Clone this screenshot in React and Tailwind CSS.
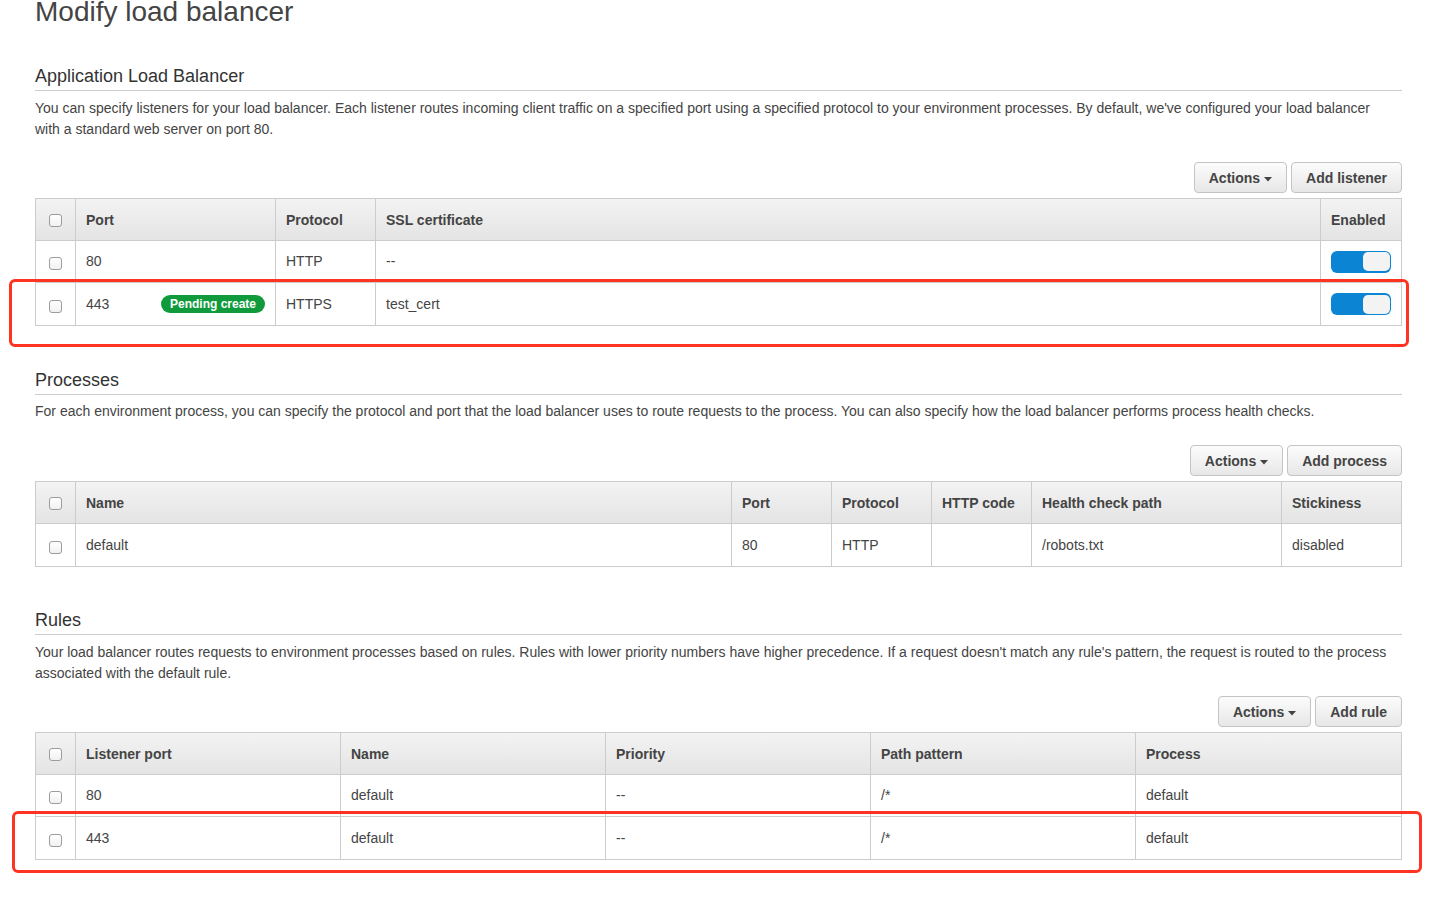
import React from "react";

function Checkbox({ body }) {
  return (
    <span
      className={`block w-[13px] h-[13px] rounded-[3px] border border-[#9c9c9c] bg-[linear-gradient(#ffffff,#f1f1f1)] ${body ? "mt-[4px]" : "mt-[2px]"}`}
    />
  );
}

function Caret() {
  return (
    <svg width="8" height="5" viewBox="0 0 8 5" className="ml-[4px] mt-[1px]">
      <path d="M0 0 L8 0 L4 4.5 Z" fill="#444" />
    </svg>
  );
}

function Btn({ children, caret }) {
  return (
    <button className="h-[31px] px-[14px] pt-[2px] rounded-[4px] border border-[#c4c4c4] bg-[linear-gradient(#fcfcfc,#e7e7e7)] text-[14px] font-bold text-[#444] flex items-center">
      {children}
      {caret && <Caret />}
    </button>
  );
}

function Toggle() {
  return (
    <span className="flex items-center w-[60px] h-[22px] rounded-[6px] bg-[#0b84d4] justify-end pr-[1px]">
      <span className="block w-[27px] h-[19px] rounded-[5px] bg-[#f3f3f3]" />
    </span>
  );
}

function Table({ cols, headers, rows }) {
  return (
    <div className="border border-[#cccccc]">
      <div className={`grid ${cols} h-[42px] border-b border-[#cccccc] bg-[linear-gradient(#f3f3f3,#e4e4e4)]`}>
        <div className="flex justify-center items-center border-r border-[#cccccc]">
          <Checkbox />
        </div>
        {headers.map((h, i) => (
          <div
            key={i}
            className={`flex items-center pl-[10px] pr-[10px] pt-[1px] font-bold text-[14px] text-[#444] ${i < headers.length - 1 ? "border-r border-[#cccccc]" : ""}`}
          >
            {h}
          </div>
        ))}
      </div>
      {rows.map((r, ri) => (
        <div
          key={ri}
          className={`grid ${cols} h-[42px] ${ri < rows.length - 1 ? "border-b border-[#cccccc]" : ""}`}
        >
          <div className="flex justify-center items-center border-r border-[#cccccc]">
            <Checkbox body />
          </div>
          {r.map((c, i) => (
            <div
              key={i}
              className={`flex items-center px-[10px] text-[14px] text-[#444] ${i < r.length - 1 ? "border-r border-[#cccccc]" : ""}`}
            >
              {c}
            </div>
          ))}
        </div>
      ))}
    </div>
  );
}

function Heading({ children, className }) {
  return (
    <h2 className={`text-[18px] leading-[20px] text-[#333] pb-[4px] border-b border-[#cccccc] ${className}`}>
      {children}
    </h2>
  );
}

export default function App() {
  return (
    <div className="relative w-full min-h-[897px] bg-white overflow-hidden font-['Liberation_Sans',Arial,Helvetica,sans-serif] text-[#444]">
      <div className="px-[35px] w-[1437px]">
        <h1 className="text-[28px] leading-[32px] text-[#444] mt-[-4px]">Modify load balancer</h1>

        <Heading className="mt-[38px]">Application Load Balancer</Heading>
        <p className="mt-[7px] text-[14px] leading-[21px] text-[#444]">
          You can specify listeners for your load balancer. Each listener routes incoming client traffic on a specified port using a specified protocol to your environment processes. By default, we've configured your load balancer
          <br />
          with a standard web server on port 80.
        </p>
        <div className="flex justify-end gap-[4px] mt-[22px]">
          <Btn caret>Actions</Btn>
          <Btn>Add listener</Btn>
        </div>
        <div className="mt-[5px]">
          <Table
            cols="grid-cols-[40px_200px_100px_1fr_80px]"
            headers={["Port", "Protocol", "SSL certificate", "Enabled"]}
            rows={[
              ["80", "HTTP", "--", <Toggle key="t1" />],
              [
                <div key="p" className="flex items-center justify-between w-full">
                  <span>443</span>
                  <span className="h-[18px] px-[9px] rounded-full bg-[#0f9b3b] text-white text-[12px] font-bold flex items-center">
                    Pending create
                  </span>
                </div>,
                "HTTPS",
                "test_cert",
                <Toggle key="t2" />,
              ],
            ]}
          />
        </div>

        <Heading className="mt-[44px]">Processes</Heading>
        <p className="mt-[6px] text-[14px] leading-[21px] text-[#444]">
          For each environment process, you can specify the protocol and port that the load balancer uses to route requests to the process. You can also specify how the load balancer performs process health checks.
        </p>
        <div className="flex justify-end gap-[4px] mt-[23px]">
          <Btn caret>Actions</Btn>
          <Btn>Add process</Btn>
        </div>
        <div className="mt-[5px]">
          <Table
            cols="grid-cols-[40px_656px_100px_100px_100px_250px_1fr]"
            headers={["Name", "Port", "Protocol", "HTTP code", "Health check path", "Stickiness"]}
            rows={[["default", "80", "HTTP", "", "/robots.txt", "disabled"]]}
          />
        </div>

        <Heading className="mt-[43px]">Rules</Heading>
        <p className="mt-[7px] text-[14px] leading-[21px] text-[#444]">
          Your load balancer routes requests to environment processes based on rules. Rules with lower priority numbers have higher precedence. If a request doesn't match any rule's pattern, the request is routed to the process associated with the default rule.
        </p>
        <div className="flex justify-end gap-[4px] mt-[12px]">
          <Btn caret>Actions</Btn>
          <Btn>Add rule</Btn>
        </div>
        <div className="mt-[5px]">
          <Table
            cols="grid-cols-[40px_repeat(5,1fr)]"
            headers={["Listener port", "Name", "Priority", "Path pattern", "Process"]}
            rows={[
              ["80", "default", "--", "/*", "default"],
              ["443", "default", "--", "/*", "default"],
            ]}
          />
        </div>
      </div>

      <div className="absolute left-[9px] top-[279px] w-[1400px] h-[68px] border-[3px] border-[#ff3322] rounded-[6px] pointer-events-none" />
      <div className="absolute left-[12px] top-[811px] w-[1410px] h-[62px] border-[3px] border-[#ff3322] rounded-[6px] pointer-events-none" />
    </div>
  );
}
